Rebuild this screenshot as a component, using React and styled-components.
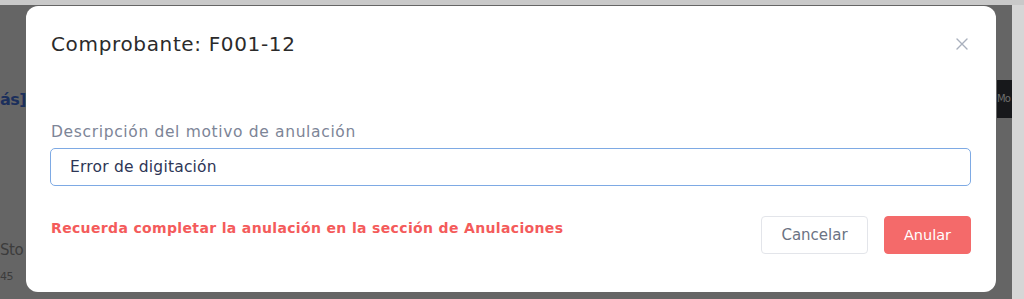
import React from 'react';
import styled, { createGlobalStyle } from 'styled-components';

const GlobalStyle = createGlobalStyle`
	html, body {
		margin: 0;
		padding: 0;
		width: 1024px;
		height: 299px;
		overflow: hidden;
	}
	body {
		font-family: 'DejaVu Sans', 'Liberation Sans', sans-serif;
	}
`;

const Page = styled.div`
	position: relative;
	width: 1024px;
	height: 299px;
	display: flex;
	flex-direction: column;
	background: #656565;
`;

const TopStrip = styled.div`
	height: 5px;
	background: #c9c9c9;
`;

const Backdrop = styled.div`
	flex: 1;
	display: flex;
`;

const Behind = styled.div`
	flex: 1;
	display: flex;
	justify-content: space-between;
	padding-top: 75px;
`;

const LeftCol = styled.div`
	display: flex;
	flex-direction: column;
	align-items: flex-start;
`;

const BlueLink = styled.span`
	font-weight: 700;
	font-size: 16px;
	color: #1b2f5c;
	line-height: 24px;
	margin-top: 8px;
	letter-spacing: -0.5px;
`;

const GreyText = styled.span`
	color: #3c3c3c;
	font-size: ${(p) => p.$size}px;
	line-height: ${(p) => p.$size + 4}px;
	margin-top: ${(p) => p.$top}px;
	letter-spacing: -0.5px;
`;

const DarkButton = styled.div`
	width: 15px;
	height: 38px;
	background: #17181b;
	color: #6e6e6e;
	font-size: 10px;
	line-height: 38px;
	letter-spacing: -1px;
	white-space: nowrap;
`;

const Scrollbar = styled.div`
	width: 12px;
	background: #d6d6d6;
`;

const Modal = styled.div`
	position: absolute;
	left: 26px;
	top: 6px;
	width: 970px;
	height: 286px;
	box-sizing: border-box;
	background: #ffffff;
	border-radius: 12px;
	padding: 0 25px 0 24px;
	display: flex;
	flex-direction: column;
`;

const Header = styled.div`
	display: flex;
	justify-content: space-between;
	align-items: center;
	padding-top: 24px;
`;

const Title = styled.h2`
	margin: 0 0 0 1px;
	font-weight: 400;
	font-size: 20px;
	line-height: 28px;
	color: #2b2b2b;
	letter-spacing: 0.65px;
`;

const CloseButton = styled.button`
	border: 0;
	background: none;
	padding: 0;
	margin-right: 2px;
	width: 14px;
	height: 14px;
	display: flex;
	color: #a9b0bd;
	cursor: pointer;
`;

const Label = styled.label`
	display: block;
	margin: 64px 0 6px 1px;
	font-size: 15.5px;
	line-height: 20px;
	color: #7d8597;
	letter-spacing: 0.65px;
`;

const Input = styled.input`
	box-sizing: border-box;
	width: 100%;
	height: 38px;
	border: 1.5px solid #7eaae4;
	border-radius: 5px;
	padding: 0 19px;
	font-family: 'DejaVu Sans', sans-serif;
	font-size: 15.5px;
	letter-spacing: 0.2px;
	color: #2e3656;
	outline: none;
`;

const Footer = styled.div`
	display: flex;
	justify-content: space-between;
	align-items: flex-start;
	margin-top: 30px;
`;

const Warning = styled.p`
	margin: 2px 0 0 1px;
	font-size: 14px;
	line-height: 20px;
	font-weight: 700;
	color: #f45b5b;
	letter-spacing: 0.35px;
`;

const Actions = styled.div`
	display: flex;
	gap: 16px;
`;

const Button = styled.button`
	height: 38px;
	box-sizing: border-box;
	border-radius: 4px;
	font-family: 'DejaVu Sans', sans-serif;
	font-size: ${(p) => (p.$danger ? 14.5 : 15)}px;
	padding: 0;
	width: ${(p) => p.$w}px;
	border: 1px solid ${(p) => (p.$danger ? '#f46a6a' : '#e3e5ea')};
	background: ${(p) => (p.$danger ? '#f46a6a' : '#ffffff')};
	color: ${(p) => (p.$danger ? '#ffffff' : '#6b7383')};
	font-weight: 400;
	cursor: pointer;
`;

const App = () => {
	return (
		<>
			<GlobalStyle />
			<Page>
				<TopStrip />
				<Backdrop>
					<Behind>
						<LeftCol>
							<BlueLink>ás]</BlueLink>
							<GreyText $size={15} $top={129}>Sto</GreyText>
							<GreyText $size={11} $top={9}>45</GreyText>
						</LeftCol>
						<DarkButton>Mo</DarkButton>
					</Behind>
					<Scrollbar />
				</Backdrop>
				<Modal>
					<Header>
						<Title>Comprobante: F001-12</Title>
						<CloseButton aria-label='Cerrar'>
							<svg width='14' height='14' viewBox='0 0 14 14'>
								<path d='M2 2 L12 12 M12 2 L2 12' stroke='currentColor' strokeWidth='1.4' strokeLinecap='round' />
							</svg>
						</CloseButton>
					</Header>
					<Label htmlFor='motivo'>Descripción del motivo de anulación</Label>
					<Input id='motivo' defaultValue='Error de digitación' />
					<Footer>
						<Warning>Recuerda completar la anulación en la sección de Anulaciones</Warning>
						<Actions>
							<Button $w={107}>Cancelar</Button>
							<Button $w={87} $danger>
								Anular
							</Button>
						</Actions>
					</Footer>
				</Modal>
			</Page>
		</>
	);
};

export default App;
